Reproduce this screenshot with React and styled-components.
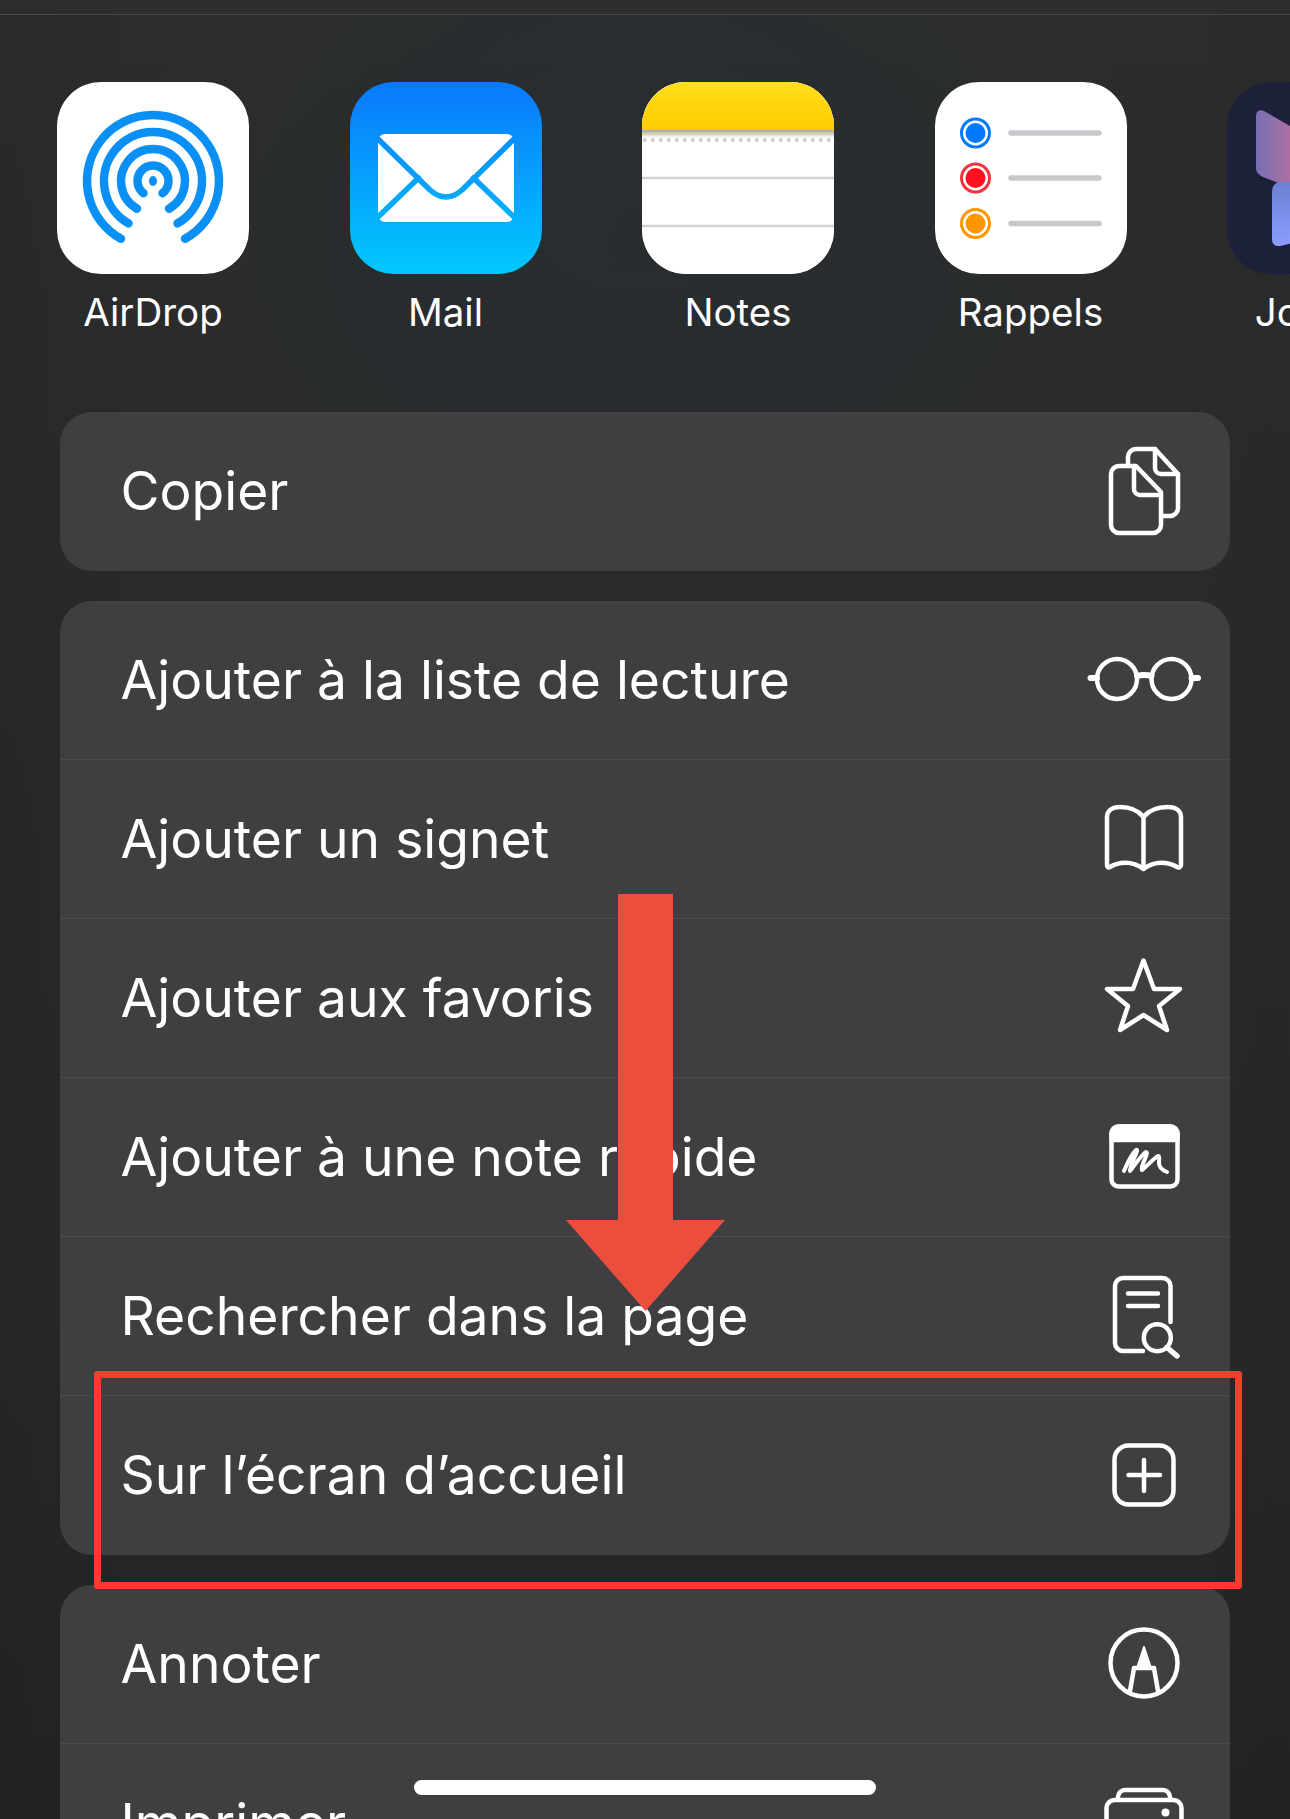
import React from 'react'
import styled, { createGlobalStyle } from 'styled-components'

const GlobalStyle = createGlobalStyle`
  html, body {
    margin: 0;
    padding: 0;
    background: #262626;
  }
`

const Page = styled.div`
  position: relative;
  width: 1290px;
  height: 1819px;
  overflow: hidden;
  font-family: Inter, "Liberation Sans", sans-serif;
  color: #fff;
  background:
    radial-gradient(ellipse 520px 420px at 640px 230px, rgba(30, 52, 58, 0.22), rgba(30, 52, 58, 0)),
    linear-gradient(90deg, rgba(0, 0, 0, 0.05), rgba(0, 0, 0, 0) 12%, rgba(0, 0, 0, 0) 90%, rgba(0, 0, 0, 0.03)),
    linear-gradient(180deg, #2b2c2d 0, #2a2b2c 320px, #292929 800px, #272727 1400px, #232323 1819px);
`

const TopBar = styled.div`
  height: 15px;
  box-sizing: border-box;
  border-bottom: 1px solid #47494b;
  background: #2d2d2f;
`

const AppStrip = styled.div`
  display: flex;
  gap: 100.5px;
  padding: 67px 0 0 57px;
  height: 397px;
  box-sizing: border-box;
`

const AppCell = styled.div`
  flex: 0 0 192px;
  display: flex;
  flex-direction: column;
  align-items: center;
`

const AppIcon = styled.div`
  width: 192px;
  height: 192px;
  border-radius: 44px;
  overflow: hidden;
  background: ${p => p.$bg};

  svg {
    display: block;
  }
`

const AppLabel = styled.div`
  margin-top: 16px;
  font-size: 38.5px;
  line-height: 44px;
  white-space: nowrap;
`

const Cards = styled.div`
  display: flex;
  flex-direction: column;
  gap: 30px;
  width: 1170px;
  margin-left: 60px;
`

const Card = styled.div`
  border-radius: 32px;
  background: #3f3f41;
`

const Row = styled.div`
  display: flex;
  align-items: center;
  justify-content: space-between;
  box-sizing: border-box;
  height: 159px;
  padding: 0 26px 1.5px 60.5px;

  &:not(:last-child) {
    border-bottom: 1px solid #4c4c4e;
  }
`

const RowLabel = styled.span`
  font-size: 53.4px;
  letter-spacing: 0;
`

const IconSlot = styled.div`
  flex: 0 0 120px;
  display: flex;
  justify-content: center;
  align-items: center;
`

const Glyph = styled.svg`
  display: block;
  fill: none;
  stroke: #fff;
  stroke-width: 4.5;
  stroke-linecap: round;
  stroke-linejoin: round;
  overflow: visible;
`

const HighlightBox = styled.div`
  position: absolute;
  left: 94px;
  top: 1371px;
  width: 1148px;
  height: 218px;
  box-sizing: border-box;
  border: 7px solid #ff3b30;
  border-radius: 3px;
`

const ArrowMark = styled.svg`
  position: absolute;
  left: 566px;
  top: 894px;
`

const HomeBar = styled.div`
  position: absolute;
  left: 414px;
  top: 1780px;
  width: 462px;
  height: 15px;
  border-radius: 8px;
  background: #fff;
`

const arcPath = (r, deg) => {
  const a = (deg * Math.PI) / 180
  const dx = r * Math.sin(a)
  const dy = r * Math.cos(a)
  return `M${96 - dx} ${99 + dy}A${r} ${r} 0 1 1 ${96 + dx} ${99 + dy}`
}

const AirDropArt = () => (
  <svg width="192" height="192" viewBox="0 0 192 192" fill="none" stroke="#0a90f5" strokeWidth="8.5" strokeLinecap="round">
    {[[66, 29], [49, 30], [32, 30], [15.5, 38]].map(([r, deg]) => (
      <path key={r} d={arcPath(r, deg)} />
    ))}
    <ellipse cx="96" cy="99" rx="4" ry="5" fill="#0a90f5" stroke="none" />
  </svg>
)

const MailArt = () => (
  <svg width="192" height="192" viewBox="0 0 192 192" fill="none">
    <defs>
      <linearGradient id="mailStroke" gradientUnits="userSpaceOnUse" x1="0" y1="0" x2="0" y2="192">
        <stop offset="0" stopColor="#0a78fb" />
        <stop offset="1" stopColor="#02c8fe" />
      </linearGradient>
    </defs>
    <rect x="28" y="52" width="136" height="88" rx="7" fill="#fff" />
    <g stroke="url(#mailStroke)" strokeWidth="5.5" strokeLinecap="round" strokeLinejoin="round">
      <path d="M27 56L80 108Q96 122 112 108L165 56" />
      <path d="M27 136L68.500 96M165 136L123.500 96" />
    </g>
  </svg>
)

const NotesArt = () => (
  <svg width="192" height="192" viewBox="0 0 192 192" fill="none">
    <defs>
      <linearGradient id="notesTop" x1="0" y1="0" x2="0" y2="1">
        <stop offset="0" stopColor="#ffdf1a" />
        <stop offset="1" stopColor="#ffcc00" />
      </linearGradient>
      <linearGradient id="notesShade" x1="0" y1="0" x2="0" y2="1">
        <stop offset="0" stopColor="#a8a59a" />
        <stop offset="1" stopColor="#ffffff" />
      </linearGradient>
    </defs>
    <rect x="0" y="0" width="192" height="192" fill="#fff" />
    <rect x="0" y="48" width="192" height="8" fill="url(#notesShade)" />
    <rect x="0" y="0" width="192" height="48" fill="url(#notesTop)" />
    <line x1="1" y1="58" x2="192" y2="58" stroke="#c9c9cf" strokeWidth="3.500" strokeDasharray="3.500 4.500" />
    <line x1="0" y1="96" x2="192" y2="96" stroke="#d2d2d6" strokeWidth="2.500" />
    <line x1="0" y1="144" x2="192" y2="144" stroke="#d2d2d6" strokeWidth="2.500" />
  </svg>
)

const reminderRows = [
  { y: 51, ring: '#007aff', dot: '#007aff' },
  { y: 96, ring: '#f5333f', dot: '#ff0f1f' },
  { y: 141.5, ring: '#ff9500', dot: '#ff9500' }
]

const RemindersArt = () => (
  <svg width="192" height="192" viewBox="0 0 192 192" fill="none">
    {reminderRows.map(({ y, ring, dot }) => (
      <g key={y}>
        <circle cx="40.500" cy={y} r="14" stroke={ring} strokeWidth="3" />
        <circle cx="40.500" cy={y} r="10" fill={dot} />
        <line x1="76" y1={y} x2="164" y2={y} stroke="#c7c7cc" strokeWidth="5.500" strokeLinecap="round" />
      </g>
    ))}
  </svg>
)

const JournalArt = () => (
  <svg width="192" height="192" viewBox="0 0 192 192" fill="none">
    <defs>
      <linearGradient id="journalTop" x1="0" y1="0" x2="1" y2="0">
        <stop offset="0" stopColor="#7770b6" />
        <stop offset="1" stopColor="#b86f9d" />
      </linearGradient>
      <linearGradient id="journalLow" x1="0" y1="0" x2="0" y2="1">
        <stop offset="0" stopColor="#6c7fd2" />
        <stop offset="1" stopColor="#8b9eff" />
      </linearGradient>
    </defs>
    <path d="M29 35Q29 26 37 29L70 48V108L36 95Q29 92 29 86Z" fill="url(#journalTop)" />
    <path d="M45 110Q45 101 53 100L70 100V160L53 164Q45 165 45 157Z" fill="url(#journalLow)" />
  </svg>
)

const CopyIcon = () => (
  <Glyph width="72" height="90" viewBox="0 0 72 90">
    <path d="M20 20V11a8 8 0 0 1 8-8H47L70 28V62a8 8 0 0 1-8 8H54" />
    <path d="M47 3V22a6 6 0 0 0 6 6H70" />
    <path d="M28 20H11a8 8 0 0 0-8 8V79a8 8 0 0 0 8 8H45a8 8 0 0 0 8-8V46Z" />
    <path d="M26 20V43a6 6 0 0 0 6 6H53" />
  </Glyph>
)

const GlassesIcon = () => (
  <Glyph width="112" height="46" viewBox="0 0 112 46">
    <circle cx="29" cy="23" r="20" />
    <circle cx="83.500" cy="23" r="20" />
    <path d="M49 20Q56 18 63.500 20M2.500 22H9M103.500 22H110" strokeWidth="6" />
  </Glyph>
)

const BookIcon = () => (
  <Glyph width="80" height="66" viewBox="0 0 80 66">
    <path d="M39.500 12C34 5 25 2 16 2C8 2 3 6 3 12V60C3 62 4 63 6 62C14 57 28 55 39.500 64C51 55 65 57 73 62C75 63 77 62 77 60V12C77 6 72 2 64 2C55 2 45 5 39.500 12V64" />
  </Glyph>
)

const StarIcon = () => (
  <Glyph width="80" height="76" viewBox="0 1 80 76">
    <path d="M39.500 2.500L50 31H76L55 48L63 72L39.500 57L16 72L24 48L3 31H29Z" />
  </Glyph>
)

const QuickNoteIcon = () => (
  <Glyph width="71" height="65" viewBox="0 0 71 65">
    <rect x="2.500" y="2.500" width="66" height="60" rx="7" />
    <path d="M2.500 16V9.500a7 7 0 0 1 7-7H61.500a7 7 0 0 1 7 7V16Z" fill="#fff" />
    <path d="M15 47C18 40 23 30 27 26C29 25 28 28 26 32C24 37 21 43 21 47C25 42 33 30 37 28C39 28 37 32 36 35C34 39 32 44 33 46C36 44 45 34 49 32C51 32 50 36 50 39C50 44 53 46 58 48" strokeWidth="4" />
  </Glyph>
)

const FindIcon = () => (
  <Glyph width="66" height="82" viewBox="-2 -2 66 82">
    <path d="M57.500 46V10a8 8 0 0 0-8-8H10a8 8 0 0 0-8 8V67a8 8 0 0 0 8 8H30" />
    <path d="M15 17.500H45M15 30H45" />
    <circle cx="44.300" cy="61.700" r="13.500" />
    <path d="M54 71.500L64 80" strokeWidth="5.500" />
  </Glyph>
)

const AddHomeIcon = () => (
  <Glyph width="64" height="64" viewBox="0 0 64 64">
    <rect x="2.500" y="2.500" width="59" height="59" rx="14" />
    <path d="M32 17V48M16.500 32H48" />
  </Glyph>
)

const MarkupIcon = () => (
  <Glyph width="72" height="72" viewBox="0 0 72 72">
    <circle cx="36" cy="36" r="33.500" />
    <path d="M36 20L29 41H43Z" fill="#fff" strokeWidth="2" />
    <path d="M26 41L22 64M46 41L50 64M26 41H46" />
  </Glyph>
)

const PrinterIcon = () => (
  <Glyph width="80" height="72" viewBox="0 0 80 72">
    <path d="M14 12V10a7 7 0 0 1 7-7H59a7 7 0 0 1 7 7V12" />
    <rect x="2.500" y="13" width="75" height="44" rx="8" />
    <circle cx="61.500" cy="25.500" r="4" fill="#fff" stroke="none" />
  </Glyph>
)

const apps = [
  { label: 'AirDrop', bg: '#fff', Art: AirDropArt },
  { label: 'Mail', bg: 'linear-gradient(180deg, #0a78fb 0%, #02c8fe 100%)', Art: MailArt },
  { label: 'Notes', bg: '#fff', Art: NotesArt },
  { label: 'Rappels', bg: '#fff', Art: RemindersArt },
  { label: 'Journal', bg: '#1c2039', Art: JournalArt }
]

const groups = [
  [{ label: 'Copier', Icon: CopyIcon }],
  [
    { label: 'Ajouter à la liste de lecture', Icon: GlassesIcon },
    { label: 'Ajouter un signet', Icon: BookIcon },
    { label: 'Ajouter aux favoris', Icon: StarIcon },
    { label: 'Ajouter à une note rapide', Icon: QuickNoteIcon },
    { label: 'Rechercher dans la page', Icon: FindIcon },
    { label: 'Sur l’écran d’accueil', Icon: AddHomeIcon }
  ],
  [
    { label: 'Annoter', Icon: MarkupIcon },
    { label: 'Imprimer', Icon: PrinterIcon }
  ]
]

const App = () => (
  <Page>
    <GlobalStyle />
    <TopBar />
    <AppStrip>
      {apps.map(({ label, bg, Art }) => (
        <AppCell key={label}>
          <AppIcon $bg={bg}>
            <Art />
          </AppIcon>
          <AppLabel>{label}</AppLabel>
        </AppCell>
      ))}
    </AppStrip>
    <Cards>
      {groups.map((rows, i) => (
        <Card key={i}>
          {rows.map(({ label, Icon }) => (
            <Row key={label}>
              <RowLabel>{label}</RowLabel>
              <IconSlot>
                <Icon />
              </IconSlot>
            </Row>
          ))}
        </Card>
      ))}
    </Cards>
    <ArrowMark width="159" height="417" viewBox="0 0 159 417">
      <path d="M52 0H107V326H159L79.500 417L0 326H52Z" fill="#eb4e3d" />
    </ArrowMark>
    <HighlightBox />
    <HomeBar />
  </Page>
)

export default App
